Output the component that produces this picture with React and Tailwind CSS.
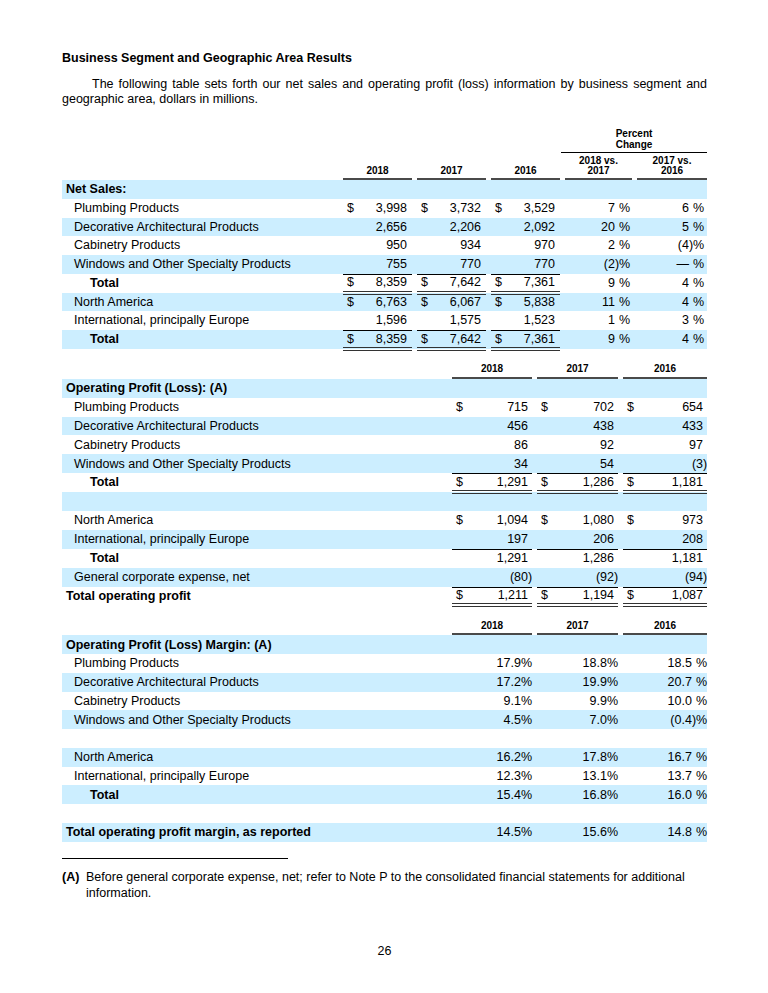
import React from 'react';

const T1 = 'grid grid-cols-[276px_69px_69px_69px_67px_70px] gap-x-[5px] grid-rows-[18.75px] h-[18.75px]';
const T1H = 'grid grid-cols-[276px_69px_69px_69px_67px_70px] gap-x-[5px]';
const T2 = 'grid grid-cols-[385px_80px_81px_84px] gap-x-[5px] grid-rows-[18.9px] h-[18.9px]';
const T3 = 'grid grid-cols-[385px_80px_81px_84px] gap-x-[5px] grid-rows-[18.75px] h-[18.75px]';
const T2H = 'grid grid-cols-[385px_80px_81px_84px] gap-x-[5px]';

const Paren = ({ on }) => <span className="inline-block w-[4px] text-left">{on ? ')' : ''}</span>;

const Row = ({ grid, blue, label, kind, children }) => {
    const lab = kind === 'head' ? 'pl-[4px] font-bold' : kind === 'total' ? 'pl-[28px] font-bold' : 'pl-[12px]';
    return (
        <div className={`${grid} leading-none ${blue ? 'bg-[#cceeff]' : ''}`}>
            <div className={`flex items-center whitespace-nowrap ${lab}`}>{label}</div>
            {children}
        </div>
    );
};

// the double rule sits on the row boundary, so it hangs 2px below the cell
const lineCls = (top, dbl) =>
    `${top ? 'border-t border-t-black' : ''} ${dbl ? '-mb-[2px] border-b-[4px] border-double border-b-[#333]' : ''}`;

const Money1 = ({ d, v, top, dbl }) => (
    <div className={`flex items-center justify-between pl-[4px] pr-[5px] ${lineCls(top, dbl)}`}>
        <span>{d ? '$' : ''}</span>
        <span>{v}</span>
    </div>
);

const Pct1 = ({ v, p, pr }) => (
    <div className={`flex items-center justify-end ${pr}`}>
        <span>{v}</span>
        <Paren on={p} />
        <span>%</span>
    </div>
);

const Money2 = ({ d, v, p, top, dbl }) => (
    <div className={`flex items-center justify-between pl-[4px] ${lineCls(top, dbl)}`}>
        <span>{d ? '$' : ''}</span>
        <span>
            {v}
            <Paren on={p} />
        </span>
    </div>
);

const netSales = [
    { label: 'Plumbing Products', v: [['$', '3,998'], ['$', '3,732'], ['$', '3,529']], pc: [['7'], ['6']] },
    { label: 'Decorative Architectural Products', blue: true, v: [['', '2,656'], ['', '2,206'], ['', '2,092']], pc: [['20'], ['5']] },
    { label: 'Cabinetry Products', v: [['', '950'], ['', '934'], ['', '970']], pc: [['2'], ['(4', true]] },
    { label: 'Windows and Other Specialty Products', blue: true, v: [['', '755'], ['', '770'], ['', '770']], pc: [['(2', true], ['—']] },
    { label: 'Total', kind: 'total', top: true, dbl: true, v: [['$', '8,359'], ['$', '7,642'], ['$', '7,361']], pc: [['9'], ['4']] },
    { label: 'North America', blue: true, v: [['$', '6,763'], ['$', '6,067'], ['$', '5,838']], pc: [['11'], ['4']] },
    { label: 'International, principally Europe', v: [['', '1,596'], ['', '1,575'], ['', '1,523']], pc: [['1'], ['3']] },
    { label: 'Total', kind: 'total', blue: true, top: true, dbl: true, v: [['$', '8,359'], ['$', '7,642'], ['$', '7,361']], pc: [['9'], ['4']] },
];

const opProfit = [
    { label: 'Operating Profit (Loss): (A)', kind: 'head', blue: true },
    { label: 'Plumbing Products', v: [['$', '715'], ['$', '702'], ['$', '654']] },
    { label: 'Decorative Architectural Products', blue: true, v: [['', '456'], ['', '438'], ['', '433']] },
    { label: 'Cabinetry Products', v: [['', '86'], ['', '92'], ['', '97']] },
    { label: 'Windows and Other Specialty Products', blue: true, v: [['', '34'], ['', '54'], ['', '(3', true]] },
    { label: 'Total', kind: 'total', top: true, dbl: true, v: [['$', '1,291'], ['$', '1,286'], ['$', '1,181']] },
    { label: '', blue: true },
    { label: 'North America', v: [['$', '1,094'], ['$', '1,080'], ['$', '973']] },
    { label: 'International, principally Europe', blue: true, v: [['', '197'], ['', '206'], ['', '208']] },
    { label: 'Total', kind: 'total', top: true, v: [['', '1,291'], ['', '1,286'], ['', '1,181']] },
    { label: 'General corporate expense, net', blue: true, v: [['', '(80', true], ['', '(92', true], ['', '(94', true]] },
    { label: 'Total operating profit', kind: 'head', top: true, dbl: true, v: [['$', '1,211'], ['$', '1,194'], ['$', '1,087']] },
];

const margins = [
    { label: 'Operating Profit (Loss) Margin: (A)', kind: 'head', blue: true },
    { label: 'Plumbing Products', v: ['17.9%', '18.8%', ['18.5']] },
    { label: 'Decorative Architectural Products', blue: true, v: ['17.2%', '19.9%', ['20.7']] },
    { label: 'Cabinetry Products', v: ['9.1%', '9.9%', ['10.0']] },
    { label: 'Windows and Other Specialty Products', blue: true, v: ['4.5%', '7.0%', ['(0.4', true]] },
    { label: '' },
    { label: 'North America', blue: true, v: ['16.2%', '17.8%', ['16.7']] },
    { label: 'International, principally Europe', v: ['12.3%', '13.1%', ['13.7']] },
    { label: 'Total', kind: 'total', blue: true, v: ['15.4%', '16.8%', ['16.0']] },
    { label: '' },
    { label: 'Total operating profit margin, as reported', kind: 'head', blue: true, v: ['14.5%', '15.6%', ['14.8']] },
];

const hdr = 'font-bold text-[10px] text-center';

const YearHeader = () => (
    <div className={`${T2H} ${hdr} leading-[11px]`}>
        <div />
        {['2018', '2017', '2016'].map((y) => (
            <div key={y} className="pb-[2.5px] border-b-2 border-[#4a4a4a]">{y}</div>
        ))}
    </div>
);

export default function App() {
    return (
        <div className="w-[768px] min-h-[993px] bg-white text-black font-['Liberation_Sans',Arial,sans-serif] text-[12.5px] pl-[62px] pt-[51px]">
            <div className="w-[645px]">
                <h1 className="font-bold leading-[15px]">Business Segment and Geographic Area Results</h1>
                <div className="mt-[11px] leading-[15px]">
                    <p className="indent-[30px] text-justify [text-align-last:justify]">
                        The following table sets forth our net sales and operating profit (loss) information by business segment and
                    </p>
                    <p>geographic area, dollars in millions.</p>
                </div>

                <div className="mt-[21px]">
                    <div className={`${T1H} ${hdr} leading-[11px]`}>
                        <div className="col-start-5 col-span-2 -ml-[4px] pb-[2px] border-b border-black">
                            Percent
                            <br />
                            Change
                        </div>
                    </div>
                    <div className={`${T1H} ${hdr} leading-[10px] mt-[3px]`}>
                        <div />
                        {['2018', '2017', '2016'].map((y) => (
                            <div key={y} className="flex items-end justify-center pb-[2px] border-b-2 border-[#4a4a4a]">{y}</div>
                        ))}
                        <div className="pb-[2px] border-b-2 border-[#4a4a4a]">2018 vs.<br />2017</div>
                        <div className="pb-[2px] border-b-2 border-[#4a4a4a]">2017 vs.<br />2016</div>
                    </div>
                    <Row grid={T1} blue label="Net Sales:" kind="head" />
                    {netSales.map((r, i) => (
                        <Row key={i} grid={T1} blue={r.blue} label={r.label} kind={r.kind}>
                            {r.v.map(([d, v], j) => (
                                <Money1 key={j} d={d} v={v} top={r.top} dbl={r.dbl} />
                            ))}
                            <Pct1 v={r.pc[0][0]} p={r.pc[0][1]} pr="pr-[2px]" />
                            <Pct1 v={r.pc[1][0]} p={r.pc[1][1]} pr="pr-[3px]" />
                        </Row>
                    ))}
                </div>

                <div className="mt-[14.5px]">
                    <YearHeader />
                    {opProfit.map((r, i) => (
                        <Row key={i} grid={T2} blue={r.blue} label={r.label} kind={r.kind}>
                            {r.v &&
                                r.v.map(([d, v, p], j) => (
                                    <Money2 key={j} d={d} v={v} p={p} top={r.top} dbl={r.dbl} />
                                ))}
                        </Row>
                    ))}
                </div>

                <div className="mt-[14.5px]">
                    <YearHeader />
                    {margins.map((r, i) => (
                        <Row key={i} grid={T3} blue={r.blue} label={r.label} kind={r.kind}>
                            {r.v && (
                                <>
                                    <div className="flex items-center justify-end">{r.v[0]}</div>
                                    <div className="flex items-center justify-end">{r.v[1]}</div>
                                    <div className="flex items-center justify-end">
                                        <span>{r.v[2][0]}</span>
                                        <Paren on={r.v[2][1]} />
                                        <span>%</span>
                                    </div>
                                </>
                            )}
                        </Row>
                    ))}
                </div>

                <div className="mt-[16px] w-[226px] border-t border-black" />
                <div className="mt-[10px] flex leading-[16px]">
                    <span className="w-[24px] shrink-0 font-bold">(A)</span>
                    <p className="w-[621px]">
                        Before general corporate expense, net; refer to Note P to the consolidated financial statements for additional information.
                    </p>
                </div>

                <p className="mt-[43.5px] text-center leading-[15px]">26</p>
            </div>
        </div>
    );
}
